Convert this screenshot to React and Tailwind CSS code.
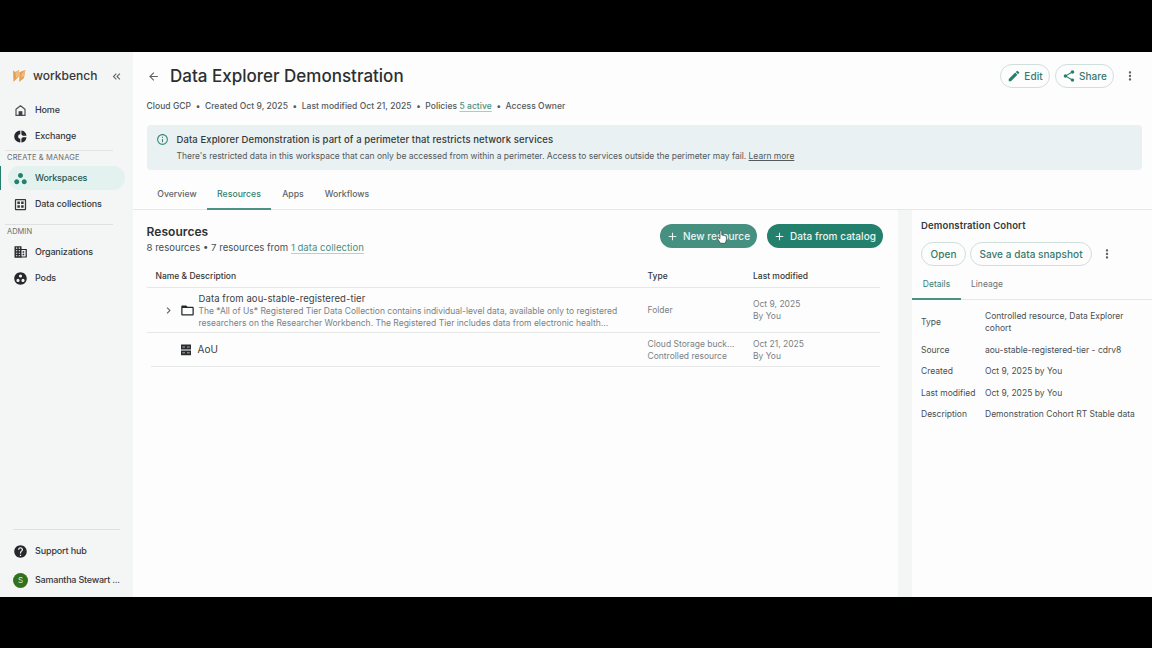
import React from "react";
import {
  MdEdit, MdShare, MdMoreVert, MdWorkspaces, MdHelp, MdInfoOutline,
  MdFolderOpen, MdOutlineDataset, MdGroupWork, MdArrowBack,
  MdAdd, MdChevronRight, MdKeyboardDoubleArrowLeft,
} from "react-icons/md";

const Logo = () => (
  <svg width="14" height="14" viewBox="0 0 14 14" className="shrink-0">
    <path d="M1 1.500 L3.500 3 L6.800 1 V7.500 L1.500 13 Z" fill="#e5a055" />
    <path d="M7.300 3.200 L13.300 1 L12 9 L7.300 13 Z" fill="#e5a055" />
    <path d="M3.500 3 L6.800 1 V7.500 L4 8.500 Z M9.500 5 L13.300 1 L12.400 6.500 L9.500 9 Z" fill="#efbd7d" />
  </svg>
);

const HomeIcon = () => (
  <svg width="13" height="13" viewBox="0 0 13 13" fill="none">
    <path d="M2 5.300 L6.500 1.800 L11 5.300 V11.400 H2 Z" stroke="#4a5053" strokeWidth="1.200" strokeLinejoin="round" />
    <path d="M4.600 7.200 H8.400 V11.400 H4.600 Z" fill="#3c4245" />
  </svg>
);

const ExchangeIcon = () => (
  <svg width="13" height="13" viewBox="0 0 13 13" fill="#25292b">
    <path d="M6.300 .4 V4.300 A2.200 2.200 0 0 0 6.300 8.700 V12.600 A6.100 6.100 0 0 1 6.300 .4 Z" />
    <path d="M7.400 .5 A6 6 0 0 1 12.500 5.700 H8.600 A2.200 2.200 0 0 0 7.400 4.400 Z" />
    <path d="M8.600 7.200 H12.500 A6 6 0 0 1 7.400 12.500 V8.500 A2.200 2.200 0 0 0 8.600 7.200 Z" />
  </svg>
);

const OrgIcon = () => (
  <svg width="13" height="12" viewBox="0 0 13 12" fill="none" stroke="#25292b">
    <path d="M1.200 .9 H6.800 V11 H1.200 Z M1 3.500 H6.800 M1 6 H6.800 M1 8.500 H6.800 M4 1 V11" strokeWidth="1.400" />
    <path d="M6.800 3.500 H12.200 V11 H6.800" strokeWidth="1.200" />
    <path d="M8.600 6 H10.200 M8.600 8.500 H10.200" strokeWidth="1.300" />
  </svg>
);

const BucketIcon = () => (
  <svg width="12" height="12" viewBox="0 0 12 12" className="mr-[6px] ml-px">
    <path d="M1 .6 H11 V5.500 H1 Z M1 6.400 H11 V11.300 H1 Z" fill="#2a2e30" />
    <path d="M2.300 3 H5 M7 3 H9.700 M2.300 8.800 H5 M7 8.800 H9.700" stroke="#b9bcbd" strokeWidth=".9" />
  </svg>
);

const HandCursor = () => (
  <svg width="10" height="14" viewBox="0 0 10 14">
    <path d="M3 7.500 V1.600 Q3 .6 3.900 .6 Q4.800 .6 4.800 1.600 V5 L8.300 5.800 Q9.500 6.100 9.400 7.400 V10 L8.300 13.300 H3.500 L.8 9.200 Q.2 8 1.200 7.600 Q1.900 7.400 3 8.700 Z" fill="#fff" stroke="#30403d" strokeWidth=".7" />
  </svg>
);

const NavItem = ({ icon, label, active = false, className = "" }) => (
  <div className={`relative flex h-6 items-center ${className}`}>
    {active && <span className="absolute left-0 top-0 h-6 w-px bg-[#23806c]" />}
    <div className={`ml-2 flex h-6 w-[117px] items-center rounded-full ${active ? "bg-[#e3f1ef] text-[#28564e]" : "text-[#34383a]"}`}>
      <span className="ml-[6px] flex w-[13px] justify-center">{icon}</span>
      <span className="ml-2 whitespace-nowrap text-[9px] font-medium tracking-[-0.015em]">{label}</span>
    </div>
  </div>
);

const Sidebar = () => (
  <aside className="flex w-[133px] shrink-0 flex-col bg-[#f4f5f5]">
    <div className="mt-4 flex h-4 items-center pl-3">
      <Logo />
      <span className="ml-[7px] w-[66px] text-[12px] font-medium text-[#34383a]">workbench</span>
      <MdKeyboardDoubleArrowLeft size={13} className="ml-[11px] text-[#5b6063]" />
    </div>
    <NavItem className="mt-[14px]" icon={<HomeIcon />} label="Home" />
    <NavItem className="mt-[2px]" icon={<ExchangeIcon />} label="Exchange" />
    <div className="ml-[5px] mt-[2px] w-[108px] border-t border-[#e3e5e5]" />
    <div className="mt-px h-3 pl-[7px] text-[7.5px] leading-3 tracking-[0.02em] text-[#686d70]">CREATE &amp; MANAGE</div>
    <NavItem className="mt-[2px]" active icon={<MdWorkspaces size={15} className="shrink-0 text-[#23806c]" />} label="Workspaces" />
    <NavItem className="mt-[2px]" icon={<MdOutlineDataset size={15} className="shrink-0" />} label="Data collections" />
    <div className="ml-[5px] mt-2 w-[108px] border-t border-[#dfe1e1]" />
    <div className="mt-px h-3 pl-[7px] text-[7.5px] leading-3 text-[#686d70]">ADMIN</div>
    <NavItem className="mt-[2px]" icon={<OrgIcon />} label="Organizations" />
    <NavItem className="mt-[2px]" icon={<MdGroupWork size={15} className="shrink-0 text-[#25292b]" />} label="Pods" />
    <div className="mb-[9px] ml-[13px] mt-auto w-[107px] border-t border-[#dfe1e1]" />
    <NavItem icon={<MdHelp size={15} className="shrink-0 text-[#25292b]" />} label="Support hub" />
    <NavItem
      className="mb-[5px] mt-[5px]"
      icon={<span className="flex size-[15px] shrink-0 items-center justify-center rounded-full bg-[#32721f] text-[8px] text-[#dcebd6]">S</span>}
      label={<span className="tracking-[-0.025em]">Samantha Stewart ...</span>}
    />
  </aside>
);

const Pill = ({ className = "", children }) => (
  <button className={`flex h-6 shrink-0 items-center justify-center whitespace-nowrap rounded-full text-[10px] font-medium tracking-[0.005em] ${className}`}>
    {children}
  </button>
);

const Tab = ({ label, active = false, className = "" }) => (
  <div className={`flex h-[31px] justify-center pt-[9px] text-[8.700px] font-medium leading-3 ${active ? "border-b-2 border-[#4a9384] text-[#318170]" : "text-[#5f6568]"} ${className}`}>
    {label}
  </div>
);

const Header = () => (
  <header>
    <div className="flex h-12 items-center pl-[14px] pr-[17px]">
      <MdArrowBack size={13} className="text-[#5d6265]" />
      <h1 className="ml-[10px] pt-[2px] text-[17px] font-medium text-[#2b2f31]">Data Explorer Demonstration</h1>
      <Pill className="ml-auto w-[50px] gap-[3px] border border-[#cfdfdc] text-[#37796c]"><MdEdit size={14} className="text-[#23806c]" />Edit</Pill>
      <Pill className="ml-[5px] w-[59px] gap-[3px] border border-[#cfdfdc] text-[#37796c]"><MdShare size={14} className="text-[#23806c]" />Share</Pill>
      <MdMoreVert size={14} className="ml-[9px] -mr-[2px] text-[#5d6265]" />
    </div>
    <div className="flex h-3 items-center whitespace-pre pl-[13.500px] text-[8.5px] font-medium tracking-[0.005em] text-[#53585b]">
      <span>Cloud GCP  •  Created Oct 9, 2025  •  Last modified Oct 21, 2025  •  Policies </span>
      <span className="text-[#4a9080] underline decoration-[#a9cbc4] underline-offset-2">5 active</span>
      <span>  •  Access Owner</span>
    </div>
    <div className="ml-[14px] mr-[10px] mt-[13px] flex h-[45px] rounded bg-[#e9f1f3] pl-[9px] pt-2">
      <MdInfoOutline size={13} className="text-[#3d8b7d]" />
      <div className="ml-[7.500px]">
        <div className="text-[9.500px] font-medium leading-[13px] tracking-[0.01em] text-[#34393b]">Data Explorer Demonstration is part of a perimeter that restricts network services</div>
        <div className="mt-1 text-[8.500px] leading-3 tracking-[-0.002em] text-[#53595c]">
          There's restricted data in this workspace that can only be accessed from within a perimeter. Access to services outside the perimeter may fail. <span className="underline">Learn more</span>
        </div>
      </div>
    </div>
    <nav className="mt-[9px] flex h-[31px] border-b border-[#e6e8e8] pl-[14px]">
      <Tab className="w-[60px]" label="Overview" />
      <Tab className="w-16" active label="Resources" />
      <Tab className="w-11" label="Apps" />
      <Tab className="w-16" label="Workflows" />
    </nav>
  </header>
);

const Stack = ({ lines }) => (
  <div className="text-[8.5px] leading-3 text-[#7b8184]">
    {lines.map((l) => <div key={l}>{l}</div>)}
  </div>
);

const Resources = () => (
  <section className="flex w-[765px] shrink-0 flex-col pl-[13.500px]">
    <div className="flex h-12 items-start justify-between pr-[15.500px] pt-[14px]">
      <div>
        <h2 className="text-[12px] font-semibold leading-4 tracking-[0.005em] text-[#2d3133]">Resources</h2>
        <p className="text-[9.600px] leading-4 text-[#4a4f52]">
          8 resources • 7 resources from <span className="text-[#4a9080] underline decoration-[#b4d1cb] underline-offset-2">1 data collection</span>
        </p>
      </div>
      <div className="flex gap-[10px]">
        <Pill className="relative w-[97px] gap-1 bg-[#459080] text-[#e9f5f2]">
          <MdAdd size={13} />New resource
          <span className="absolute left-[57px] top-[6px]"><HandCursor /></span>
        </Pill>
        <Pill className="w-[116px] gap-1 bg-[#23806c] text-[#e9f5f2]"><MdAdd size={13} />Data from catalog</Pill>
      </div>
    </div>
    <div className="mr-[18px] mt-[6px] grid h-[24px] grid-cols-[501px_105.500px_1fr] items-center border-b border-[#e6e8e8] pt-[2px] text-[8.5px] font-medium text-[#34383a]">
      <span className="pl-[9px]">Name &amp; Description</span><span>Type</span><span>Last modified</span>
    </div>
    <div className="mr-[18px] grid h-[45px] grid-cols-[501px_105.500px_1fr] items-center border-b border-[#e6e8e8]">
      <div className="flex items-center pl-[15px]">
        <MdChevronRight size={13} className="text-[#5d6265]" />
        <MdFolderOpen size={15} className="ml-[5px] text-[#25292b]" />
        <div className="ml-1 whitespace-nowrap">
          <div className="text-[9.500px] leading-[13px] tracking-[0.01em] text-[#3c4144]">Data from aou-stable-registered-tier</div>
          <div className="text-[8.5px] leading-3 text-[#7b8184]">The *All of Us* Registered Tier Data Collection contains individual-level data, available only to registered<br />researchers on the Researcher Workbench. The Registered Tier includes data from electronic health...</div>
        </div>
      </div>
      <Stack lines={["Folder"]} />
      <Stack lines={["Oct 9, 2025", "By You"]} />
    </div>
    <div className="ml-1 mr-[18px] grid h-[34px] grid-cols-[497px_105.500px_1fr] items-center border-b border-[#e6e8e8]">
      <div className="flex items-center pl-[28px] text-[10px] text-[#3c4144]">
        <BucketIcon />AoU
      </div>
      <Stack lines={["Cloud Storage buck...", "Controlled resource"]} />
      <Stack lines={["Oct 21, 2025", "By You"]} />
    </div>
  </section>
);

const details = [
  ["Type", "Controlled resource, Data Explorer cohort"],
  ["Source", "aou-stable-registered-tier - cdrv8"],
  ["Created", "Oct 9, 2025 by You"],
  ["Last modified", "Oct 9, 2025 by You"],
  ["Description", "Demonstration Cohort RT Stable data"],
];

const DetailsPanel = () => (
  <aside className="flex min-w-0 flex-1 flex-col">
    <h3 className="pl-[9px] pt-[9px] text-[9.5px] font-semibold leading-[13px] tracking-[0.015em] text-[#34383a]">Demonstration Cohort</h3>
    <div className="mt-[10px] flex items-center pl-[9px]">
      <Pill className="w-[45px] border border-[#cfdfdc] text-[#37796c]">Open</Pill>
      <Pill className="ml-1 w-[122px] border border-[#cfdfdc] text-[#37796c]">Save a data snapshot</Pill>
      <MdMoreVert size={14} className="ml-2 text-[#5d6265]" />
    </div>
    <div className="mt-[3px] flex h-[31px] border-b border-[#e6e8e8]">
      <div className="flex h-[31px] w-[49px] justify-center border-b-2 border-[#4a9384] pt-[9px] text-[8.5px] leading-3 text-[#3c8071]">Details</div>
      <div className="pl-[10px] pt-[9px] text-[8.5px] leading-3 text-[#6b7174]">Lineage</div>
    </div>
    <dl className="mt-[10px] grid grid-cols-[64px_1fr] items-center gap-y-[9.600px] pl-[9px] pr-2 text-[8.5px] leading-3 text-[#4a4f52]">
      {details.map(([k, v]) => (
        <React.Fragment key={k}><dt className="whitespace-nowrap">{k}</dt><dd>{v}</dd></React.Fragment>
      ))}
    </dl>
  </aside>
);

export default function App() {
  return (
    <div className="flex h-[648px] w-[1152px] flex-col overflow-hidden bg-black pb-[51px] pt-[52px] font-['Inter',sans-serif]">
      <div className="flex min-h-0 flex-1 bg-[#fdfdfd]">
        <Sidebar />
        <main className="flex min-w-0 flex-1 flex-col">
          <Header />
          <div className="flex min-h-0 flex-1">
            <Resources />
            <div className="w-[14px] shrink-0 bg-[#f4f5f5]" />
            <DetailsPanel />
          </div>
        </main>
      </div>
    </div>
  );
}
